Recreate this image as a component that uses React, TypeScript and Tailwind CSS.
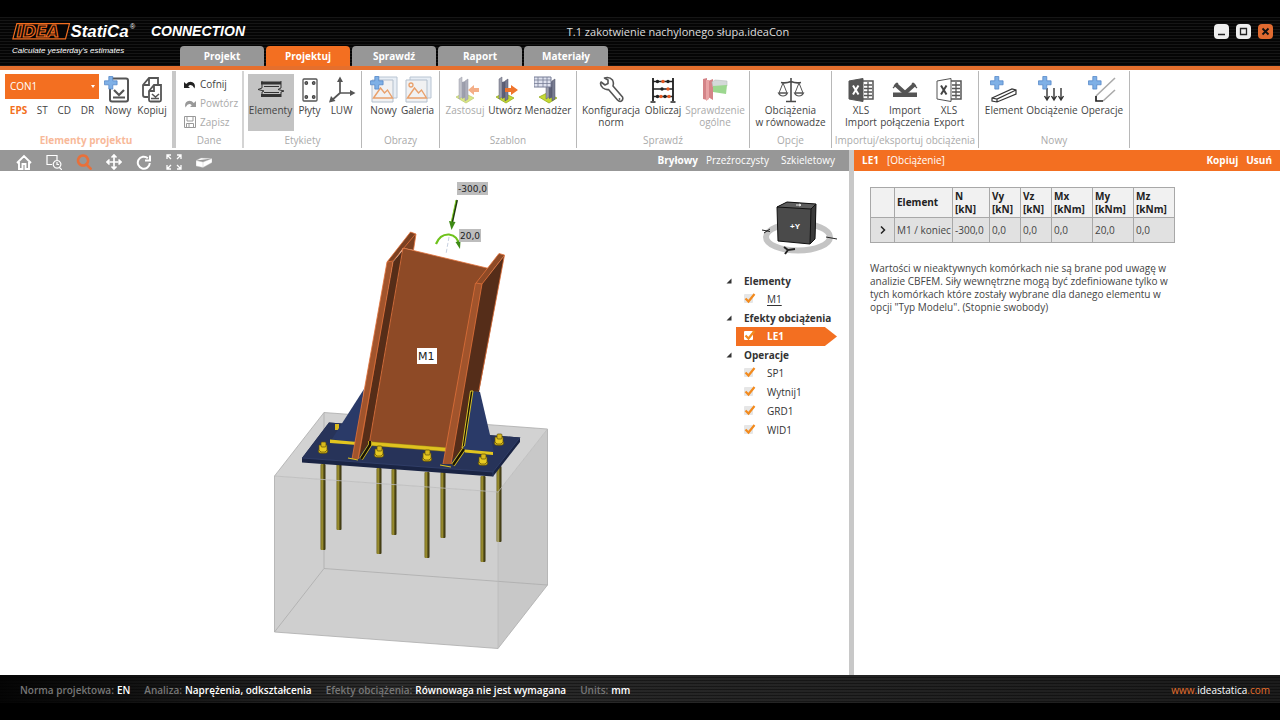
import type { ReactNode } from 'react';

const tabs = ['Projekt', 'Projektuj', 'Sprawdź', 'Raport', 'Materiały'];

const Svg = ({ children }: { children: ReactNode }) => (
  <svg viewBox="0 0 28 28" className="h-7 w-7 shrink-0" fill="none" aria-hidden="true">
    {children}
  </svg>
);

const Plus = () => (
  <path
    d="M4.8 0.5h4v4.3h4.3v4H8.8v4.3h-4V8.8H0.5v-4h4.3z"
    fill="#7fb0e6"
    stroke="#4a7fc4"
    strokeWidth="0.7"
  />
);

const NewDocIcon = () => (
  <Svg>
    <rect x="6" y="2.5" width="18" height="23" rx="2" stroke="#555" strokeWidth="2" />
    <path d="M9 21.5h12M10 14l5 5 5-5" stroke="#555" strokeWidth="2.2" />
    <Plus />
  </Svg>
);

const CopyDocIcon = () => (
  <Svg>
    <path d="M5 19V9l6-7h9v8M5 19q0 2 2 2h3M5 9h6V2" stroke="#555" strokeWidth="1.8" />
    <path d="M11 24V15l5-6h7v15q0 1.5-1.5 1.5h-9q-1.500 0-1.500-1.500zM11 15h5V9" fill="#fff" stroke="#555" strokeWidth="1.8" />
    <path d="M13 22.5h8M14 18l3.5 3 3.500-3" stroke="#555" strokeWidth="1.6" />
  </Svg>
);

const BeamIcon = () => (
  <Svg>
    <path d="M4 5.500h20v3H4zM4 18h20v3H4z" fill="#333" />
    <path d="M5 5v7l-4 1.500 6 1.500-2 1v5M24 5v7l-3 1.500 6 1.500-3 1v5M7 10.500h15M7 16.500h15" stroke="#333" />
  </Svg>
);

const PlateIcon = () => (
  <Svg>
    <rect x="7" y="3" width="14" height="22" rx="1" stroke="#555" strokeWidth="1.3" />
    <g stroke="#444" strokeWidth="1.2" fill="#888">
      <circle cx="10.3" cy="7" r="1.3" />
      <circle cx="17.7" cy="7" r="1.3" />
      <circle cx="10.3" cy="21" r="1.3" />
      <circle cx="17.7" cy="21" r="1.3" />
    </g>
  </Svg>
);

const AxesIcon = () => (
  <Svg>
    <path d="M12 3v14h13M12 17l-9 8" stroke="#555" strokeWidth="1.7" />
    <path d="M12 0.500l3 5.500H9zM27.500 17l-5.500 3v-6zM1 26.500l2-6.500 4.500 5z" fill="#555" />
  </Svg>
);

const PictureIcon = ({ add = false }: { add?: boolean }) => (
  <Svg>
    <path d="M6 1h21v21H6z" fill="#e8eef5" stroke="#b8c4d2" />
    <path d="M2 4h21v22H2z" fill="#f1f1f2" stroke="#b3bfcd" />
    <path d="M3.500 22l7-10 4 5 3-3 5 8z" stroke="#e9a06b" strokeWidth="1.4" />
    {add ? <Plus /> : <circle cx="7" cy="9" r="2" stroke="#e9a06b" strokeWidth="1.3" />}
  </Svg>
);

const ColumnIcon = ({ kind }: { kind: 'apply' | 'create' | 'manage' }) => (
  <Svg>
    <path d="M5 21l8-4 10 5-8 5z" fill="#c5d932" stroke="#97ad22" strokeWidth="0.8" />
    <g transform={kind === 'manage' ? 'translate(5 0)' : 'translate(1 0)'}>
      <path d="M7 3l3-2v20l-3 2z" fill="#9a9dab" stroke="#5c5f70" strokeWidth="0.5" />
      <path d="M10 6l4-1v16l-4 2z" fill="#5d6077" />
      <path d="M13 5l3-2v20l-3 2z" fill="#797d92" stroke="#4a4d60" strokeWidth="0.5" />
    </g>
    {kind === 'apply' && <path d="M28 12v4h-5v3l-6-5 6-5v3z" fill="#ee7a38" />}
    {kind === 'create' && <path d="M14 12h6V9l7 5-7 5v-3h-6z" fill="#ef742c" />}
    {kind === 'manage' && (
      <>
        <path d="M0 1h17v10H0z" fill="#dfe2ee" stroke="#777d96" />
        <path d="M0 4h17M0 7.500h17M4 1v10M9 1v10M13 1v10" stroke="#777d96" strokeWidth="0.8" />
      </>
    )}
  </Svg>
);

const WrenchIcon = () => (
  <Svg>
    <path
      d="M4 6l4 3 3-1.500V4L7.500 2q5-1.500 8 2 1.500 3 .5 6l9.500 11q1 2.500-1 4-2 1-4-1l-9-10.500q-3 .5-5.500-1.500Q2.500 9 4 6z"
      stroke="#555"
      strokeWidth="1.6"
      strokeLinejoin="round"
    />
    <circle cx="22.5" cy="23" r="0.9" fill="#555" />
  </Svg>
);

const AbacusIcon = () => (
  <Svg>
    <path d="M4 2v23M24 2v23" stroke="#333" strokeWidth="2" />
    <path d="M4 5.500h20M4 13h20M4 20.500h20M1.500 26h5M21.500 26h5" stroke="#222" strokeWidth="1.5" />
    <g fill="#222">
      <circle cx="8.5" cy="5.5" r="1.7" /><circle cx="19" cy="5.5" r="1.7" />
      <circle cx="13" cy="13" r="1.7" /><circle cx="8.5" cy="20.5" r="1.7" /><circle cx="16" cy="20.5" r="1.7" />
    </g>
    <g fill="#e85a22">
      <circle cx="14" cy="5.5" r="1.7" /><circle cx="19" cy="13" r="1.7" />
      <circle cx="12" cy="20.5" r="1.7" /><circle cx="20" cy="20.5" r="1.7" />
    </g>
  </Svg>
);

const CheckModelIcon = () => (
  <Svg>
    <path d="M2 3l4-1v22l-4-1zM7 5l5-2v21l-5-3z" fill="#b9343a" />
    <path d="M5 4h3v19l-3 2z" fill="#d9696b" />
    <path d="M11 6l3-2 12 1v5l-14 1z" fill="#b9c0c0" stroke="#8b9494" strokeWidth="0.6" />
    <path d="M12 10l14-1-1 9-13-2z" fill="#5bbd45" />
  </Svg>
);

const ScalesIcon = () => (
  <Svg>
    <path d="M14 2v23M4 6.500q5 1 10-1 5 2 10 1M9 25.500h10" stroke="#4a4a4a" strokeWidth="1.6" />
    <path d="M6 7l-4 10h8zM22 7l-4 10h8z" stroke="#555" />
    <path d="M1.500 17h9q-1.500 3-4.500 3t-4.500-3zM17.500 17h9q-1.500 3-4.500 3t-4.500-3z" stroke="#555" strokeWidth="1.2" />
  </Svg>
);

const XlsIcon = ({ solid = false }: { solid?: boolean }) => (
  <Svg>
    <path d="M15 5h11v18H15" fill="#fff" stroke="#555" strokeWidth="1.5" />
    <path d="M17 9h8M17 12.500h8M17 16h8M17 19.500h8M21 6v16" stroke="#555" strokeWidth="1.3" />
    <path d="M2 5l14-2.500v23L2 23z" fill={solid ? '#555' : '#fff'} stroke="#555" />
    <path d="M6 9.500l5.500 9M11.500 9.500l-5.500 9" stroke={solid ? '#fff' : '#444'} strokeWidth="2" />
  </Svg>
);

const ImportIcon = () => (
  <Svg>
    <path d="M2 16.500h24V21H2z" fill="#555" />
    <path d="M4 8l10 9M24 8l-10 9" stroke="#555" strokeWidth="4" />
    <path d="M7 7l-5 5M21 7l5 5" stroke="#555" strokeWidth="1.2" />
  </Svg>
);

const NewElementIcon = () => (
  <Svg>
    <path d="M2 22l20-9 4 1v4L7 26l-5-1zM2 22l5 1 19-9M7 23v3" stroke="#333" strokeWidth="1.2" />
    <Plus />
  </Svg>
);

const NewLoadIcon = () => (
  <Svg>
    <path d="M9 12v11M16 12v11M23 12v11M6.500 20L9 24l2.500-4M13.500 20l2.500 4 2.500-4M20.500 20l2.500 4 2.500-4" stroke="#333" strokeWidth="1.4" />
    <Plus />
  </Svg>
);

const NewOperationIcon = () => (
  <Svg>
    <path d="M8 20L27 2M15 25L27 14" stroke="#aaa" strokeWidth="1.6" />
    <path d="M8 20v5h7" stroke="#222" strokeWidth="1.7" />
    <Plus />
  </Svg>
);

type Item = { lines: string[]; icon: ReactNode; w: string; active?: boolean; off?: boolean };
type Group = { title: string; w: string; items: Item[] };

const groups: Group[] = [
  {
    title: 'Etykiety',
    w: 'w-[118px]',
    items: [
      { lines: ['Elementy'], icon: <BeamIcon />, w: 'w-[46px]', active: true },
      { lines: ['Płyty'], icon: <PlateIcon />, w: 'w-8' },
      { lines: ['LUW'], icon: <AxesIcon />, w: 'w-8' },
    ],
  },
  {
    title: 'Obrazy',
    w: 'w-[78px]',
    items: [
      { lines: ['Nowy'], icon: <PictureIcon add />, w: 'w-[34px]' },
      { lines: ['Galeria'], icon: <PictureIcon />, w: 'w-[34px]' },
    ],
  },
  {
    title: 'Szablon',
    w: 'w-[137px]',
    items: [
      { lines: ['Zastosuj'], icon: <ColumnIcon kind="apply" />, w: 'w-10', off: true },
      { lines: ['Utwórz'], icon: <ColumnIcon kind="create" />, w: 'w-10' },
      { lines: ['Menadżer'], icon: <ColumnIcon kind="manage" />, w: 'w-[46px]' },
    ],
  },
  {
    title: 'Sprawdź',
    w: 'w-[173px]',
    items: [
      { lines: ['Konfiguracja', 'norm'], icon: <WrenchIcon />, w: 'w-16' },
      { lines: ['Obliczaj'], icon: <AbacusIcon />, w: 'w-10' },
      { lines: ['Sprawdzenie', 'ogólne'], icon: <CheckModelIcon />, w: 'w-16', off: true },
    ],
  },
  {
    title: 'Opcje',
    w: 'w-[82px]',
    items: [{ lines: ['Obciążenia', 'w równowadze'], icon: <ScalesIcon />, w: 'w-16' }],
  },
  {
    title: 'Importuj/eksportuj obciążenia',
    w: 'w-[147px]',
    items: [
      { lines: ['XLS', 'Import'], icon: <XlsIcon solid />, w: 'w-11' },
      { lines: ['Import', 'połączenia'], icon: <ImportIcon />, w: 'w-11' },
      { lines: ['XLS', 'Export'], icon: <XlsIcon />, w: 'w-11' },
    ],
  },
  {
    title: 'Nowy',
    w: 'w-[151px]',
    items: [
      { lines: ['Element'], icon: <NewElementIcon />, w: 'w-10' },
      { lines: ['Obciążenie'], icon: <NewLoadIcon />, w: 'w-14' },
      { lines: ['Operacje'], icon: <NewOperationIcon />, w: 'w-11' },
    ],
  },
];

type TreeItem = { name: string; underline?: boolean; selected?: boolean };

const tree: { title: string; items: TreeItem[] }[] = [
  { title: 'Elementy', items: [{ name: 'M1', underline: true }] },
  { title: 'Efekty obciążenia', items: [{ name: 'LE1', selected: true }] },
  { title: 'Operacje', items: [{ name: 'SP1' }, { name: 'Wytnij1' }, { name: 'GRD1' }, { name: 'WID1' }] },
];

const columns = [
  { name: 'N', unit: '[kN]', value: '-300,0', w: 'w-[37px]' },
  { name: 'Vy', unit: '[kN]', value: '0,0', w: 'w-[31px]' },
  { name: 'Vz', unit: '[kN]', value: '0,0', w: 'w-[31px]' },
  { name: 'Mx', unit: '[kNm]', value: '0,0', w: 'w-[41px]' },
  { name: 'My', unit: '[kNm]', value: '20,0', w: 'w-[41px]' },
  { name: 'Mz', unit: '[kNm]', value: '0,0', w: 'w-[41px]' },
];

const status = [
  { label: 'Norma projektowa:', value: 'EN' },
  { label: 'Analiza:', value: 'Naprężenia, odkształcenia' },
  { label: 'Efekty obciążenia:', value: 'Równowaga nie jest wymagana' },
  { label: 'Units:', value: 'mm' },
];

function ToolButton({ item }: { item: Item }) {
  return (
    <button
      disabled={item.off}
      className={`${item.w} ${item.active ? 'bg-[#c3c3c3]' : ''} ${item.off ? 'text-[#aaa]' : 'text-[#444]'} flex h-[57px] shrink-0 flex-col items-center pt-0.5 text-[10px] leading-[12px] whitespace-nowrap`}
    >
      <span className={item.off ? 'opacity-60' : ''}>{item.icon}</span>
      {item.lines.map((line) => (
        <span key={line}>{line}</span>
      ))}
    </button>
  );
}

function Header() {
  return (
    <header className="border-b-4 border-[#e56f2d] bg-[repeating-linear-gradient(180deg,#050505_0px,#050505_2px,#161616_2px,#161616_3px)]">
      <div className="h-[17px] bg-black" />
      <div className="flex h-[29px] items-center">
        <div className="flex w-[245px] shrink-0 items-center">
          <svg viewBox="0 0 152 29" className="h-[29px] w-[152px]" role="img" aria-label="IDEA StatiCa">
            <path d="M17 6.500h53l-4 15.500H13z" fill="#050505" stroke="#f36f21" strokeWidth="1.2" />
            <text x="17" y="20" fontFamily="DejaVu Sans, sans-serif" fontStyle="italic" fontWeight="700" fontSize="16" fill="#1a0d05" stroke="#f36f21" strokeWidth="1.1">
              IDEA
            </text>
            <text x="71" y="20" fontFamily="Liberation Sans, sans-serif" fontStyle="italic" fontWeight="700" fontSize="17" fill="#fff">
              StatiCa
            </text>
            <text x="131" y="12" fontFamily="Liberation Sans, sans-serif" fontSize="7" fill="#fff">
              ®
            </text>
          </svg>
          <span className="font-['Liberation_Sans',sans-serif] text-[14px] font-bold text-white italic">CONNECTION</span>
        </div>
        <h1 className="flex-1 pt-0.5 text-center text-[11px] whitespace-nowrap text-[#ddd]">T.1 zakotwienie nachylonego słupa.ideaCon</h1>
        <div className="flex w-[169px] shrink-0 justify-end gap-[7px] pr-[7px]">
          <button aria-label="Minimalizuj" className="flex h-[15px] w-[15px] items-center justify-center rounded-sm bg-[#eee]">
            <svg viewBox="0 0 15 15" className="h-[15px] w-[15px]"><path d="M4 10.500h7" stroke="#222" strokeWidth="1.5" /></svg>
          </button>
          <button aria-label="Maksymalizuj" className="flex h-[15px] w-[15px] items-center justify-center rounded-sm bg-[#eee]">
            <svg viewBox="0 0 15 15" className="h-[15px] w-[15px]"><path d="M4.500 4.500h6v6h-6z" fill="none" stroke="#222" strokeWidth="1.3" /></svg>
          </button>
          <button aria-label="Zamknij" className="flex h-[15px] w-[15px] items-center justify-center rounded-sm bg-[#e06a30]">
            <svg viewBox="0 0 15 15" className="h-[15px] w-[15px]"><path d="M4.500 4.500l6 6M10.500 4.500l-6 6" stroke="#111" strokeWidth="1.8" /></svg>
          </button>
        </div>
      </div>
      <div className="flex h-5">
        <p className="w-[180px] shrink-0 pl-3 font-['Liberation_Sans',sans-serif] text-[8px] leading-[9px] text-white italic">
          Calculate yesterday's estimates
        </p>
        <nav className="flex gap-0.5">
          {tabs.map((tab) => (
            <button
              key={tab}
              className={`${tab === 'Projektuj' ? 'bg-[#f36f21]' : 'bg-[#979797]'} h-5 w-[84px] rounded-t-[4px] text-[10px] font-bold text-white`}
            >
              {tab}
            </button>
          ))}
        </nav>
      </div>
    </header>
  );
}

function Ribbon() {
  return (
    <div className="flex h-20 overflow-hidden bg-white pt-px pb-0.5">
      <div className="flex w-[176px] shrink-0 flex-col border-r-4 border-[#c8c8c8] pt-[3px]">
        <div className="flex h-[57px] pl-[5px]">
          <div className="w-[94px]">
            <div className="relative">
              <select aria-label="Element projektu" className="block h-[25px] w-full appearance-none bg-[#f36f21] pl-[5px] text-[10px] text-white">
                <option>CON1</option>
              </select>
              <svg viewBox="0 0 4 3" className="pointer-events-none absolute top-[11px] right-1 h-[3px] w-1"><path d="M0 0h4L2 3z" fill="#fff" /></svg>
            </div>
            <div className="flex justify-around pt-[5px] text-[10px] leading-[12px] text-[#444]">
              <button className="font-bold text-[#f36f21]">EPS</button>
              <button>ST</button>
              <button>CD</button>
              <button>DR</button>
            </div>
          </div>
          <div className="flex pl-0.5">
            <ToolButton item={{ lines: ['Nowy'], icon: <NewDocIcon />, w: 'w-[34px]' }} />
            <ToolButton item={{ lines: ['Kopiuj'], icon: <CopyDocIcon />, w: 'w-[34px]' }} />
          </div>
        </div>
        <p className="pt-[3px] text-center text-[10px] leading-[13px] font-bold text-[#f8b999]">Elementy projektu</p>
      </div>

      <div className="flex w-[68px] shrink-0 flex-col border-r-2 border-[#d4d4d4] pt-[3px]">
        <div className="flex h-[57px] flex-col gap-px pt-0.5 pl-2 text-[10px] text-[#aaa]">
          <button className="flex h-[18px] items-center gap-1 text-[#444]">
            <svg viewBox="0 0 12 12" className="h-3 w-3"><path d="M0 3v6h6L4.200 7.200Q7.500 4 10.500 9.500 12 5 8.500 3.200 5 2 2.200 5z" fill="#222" /></svg>
            Cofnij
          </button>
          <button disabled className="flex h-[18px] items-center gap-1">
            <svg viewBox="0 0 12 12" className="h-3 w-3"><path d="M12 3v6H6l1.800-1.800Q4.500 4 1.500 9.500 0 5 3.500 3.200 7 2 9.800 5z" fill="#999" /></svg>
            Powtórz
          </button>
          <button disabled className="flex h-[18px] items-center gap-1">
            <svg viewBox="0 0 12 12" className="h-3 w-3" fill="none" stroke="#999"><path d="M.5.5h11v11H.5zM3 .5v4.500h6V.5M2.500 11.500v-4h7v4M5 8v3" /></svg>
            Zapisz
          </button>
        </div>
        <p className="pt-[3px] text-center text-[10px] leading-[13px] text-[#aaa]">Dane</p>
      </div>

      {groups.map((group) => (
        <div key={group.title} className={`${group.w} flex shrink-0 flex-col border-r border-[#b8b8b8] pt-[3px]`}>
          <div className="flex justify-center">
            {group.items.map((item) => (
              <ToolButton key={item.lines.join(' ')} item={item} />
            ))}
          </div>
          <p className="pt-[3px] text-center text-[10px] leading-[13px] whitespace-nowrap text-[#aaa]">{group.title}</p>
        </div>
      ))}
    </div>
  );
}

const viewIcons = [
  { name: 'Widok domyślny', color: '#fff', d: <path d="M1 9l7-7 7 7M3 8v7h3.500v-5h3v5H13V8" /> },
  { name: 'Powiększ obszar', color: '#fff', d: <path d="M6 10.500H1v-9h10V6M13.500 13.500L16 16M11 6.500a3.800 3.800 0 1 0 .1 0zM11 8v2.500h2" strokeWidth="1.2" /> },
  { name: 'Powiększ', color: '#e8703a', d: <path d="M7 1.500a5 5 0 1 0 .1 0zM10.500 10.500l5 5" strokeWidth="2.6" /> },
  { name: 'Przesuń', color: '#fff', d: <path d="M8 1v14M1 8h14M5.500 3.500L8 1l2.500 2.500M5.500 12.500L8 15l2.500-2.500M3.500 5.500L1 8l2.500 2.500M12.500 5.500L15 8l-2.500 2.500" strokeWidth="1.7" /> },
  { name: 'Obróć', color: '#fff', d: <path d="M13.800 9a6 6 0 1 1-2-4.800M14 1.500v5H9" strokeWidth="2" /> },
  { name: 'Dopasuj', color: '#fff', d: <path d="M1 5V1h4M1 1l4 4M11 1h4v4M15 1l-4 4M1 11v4h4M1 15l4-4M15 11v4h-4M15 15l-4-4" strokeWidth="1.3" /> },
  { name: 'Bryła', color: '#fff', d: <path d="M0 6.500l5-2.500 11 .5v4L7 13.500 0 12zM0 6.500l7 1.500 9-3.500M7 8v5.500" fill="#fff" stroke="#bbb" strokeWidth="0.4" /> },
];

const frontRods = [
  [323, 464, 550],
  [379, 468, 554],
  [427, 472, 558],
  [483, 476, 562],
];
const backRods = [
  [339, 464, 530],
  [394, 469, 535],
  [443, 472, 538],
  [499, 466, 542],
];
const nuts = [
  [323, 448],
  [379, 452],
  [427, 456],
  [483, 460],
  [499, 440],
];

function ModelView() {
  return (
    <svg viewBox="0 171 720 504" className="min-w-0 flex-1 self-stretch" role="img" aria-label="Model 3D połączenia">
      <defs>
        <linearGradient id="rod">
          <stop offset="0" stopColor="#6f651c" />
          <stop offset="0.35" stopColor="#a39632" />
          <stop offset="0.7" stopColor="#4a4315" />
          <stop offset="1" stopColor="#3a3410" />
        </linearGradient>
      </defs>

      {/* concrete block */}
      <path d="M274.500 476L324 412.500 547.500 429 498 492z" fill="#d2d2d2" />
      <path d="M274.500 476L498 492V648.500L274.500 632z" fill="#cfcfcf" />
      <path d="M498 492L547.500 429V585L498 648.500z" fill="#c8c8c8" />
      <path
        d="M274.500 476L324 412.500 547.500 429V585L498 648.500 274.500 632zM324 412.500V568.500L274.500 632M324 568.500L547.500 585"
        fill="none"
        stroke="#acacac"
        strokeWidth="0.8"
      />

      {backRods.map(([x, y1, y2]) => (
        <rect key={x} x={x - 2.5} y={y1} width="5" height={y2 - y1} rx="1" fill="url(#rod)" />
      ))}
      {frontRods.map(([x, y1, y2]) => (
        <rect key={x} x={x - 2.5} y={y1} width="5" height={y2 - y1} rx="1" fill="url(#rod)" />
      ))}
      <path d="M274.500 476L498 492L547.500 429M498 492V648.500" fill="none" stroke="#bababa" strokeWidth="0.8" />

      {/* base plate */}
      <path d="M302 458L329 422.500 520 437.500V442L493 476.500 302 462.500z" fill="#1a2444" />
      <path d="M302 458L329 422.500 520 437.500 493 472z" fill="#273359" />
      <path d="M302 458L493 472 520 437.500M493 472V476.500" fill="none" stroke="#33416c" strokeWidth="0.8" />
      <path d="M335 424h4v6h-4z" fill="#d8b81c" />

      {/* left gusset */}
      <path d="M364 389L332 439 357 443z" fill="#2a3a68" />
      <path d="M330 439.500L357 442V445L330 443z" fill="#e2c51f" />

      {/* I-section */}
      <path d="M403 248L491 269 446 449 369 443z" fill="#8e4a26" />
      <path d="M369 441.500L446 447.500V451.500L369 445.500z" fill="#dfc21f" stroke="#7c6b10" strokeWidth="0.4" />
      <path d="M393 262L403 250 369.500 442 357 459z" fill="#562d18" />
      <path d="M387 262L410.500 232 416 234 413.500 250 403 248 393 262z" fill="#7b4021" />
      <path d="M387 262L393 261 359 459H352z" fill="#a1542c" />
      <path d="M387 262L410.500 232 416 234 413.500 250M387 262L393 261 415.500 234M387 262L352 459M393 262L358 459M403 248L369.500 442M403 248L491 269" fill="none" stroke="#e2713a" strokeWidth="0.8" />
      <path d="M361 459L370 445 370 441" fill="none" stroke="#ddc322" strokeWidth="4" />
      <path d="M361 459L370 445 370 441" fill="none" stroke="#171305" strokeWidth="2.4" />

      {/* right gusset */}
      <path d="M472 390L480 392 494 452 464 450z" fill="#2a3a68" />
      <path d="M482 284L504.500 255 479 392 472 391 463 448 450 463z" fill="#552d19" />
      <path d="M476 283L499 253.500 504.500 255 482 284z" fill="#8e4a26" />
      <path d="M476 283L482 284 451 464H443z" fill="#a1542c" />
      <path d="M476 283L499 253.500 504.500 255 479 390M476 283L482 284 504 256M475.500 283L443 464M482 284L451 464" fill="none" stroke="#e2713a" strokeWidth="0.8" />
      <path d="M470.500 391L473 391 464.500 446 462 448z" fill="#171305" stroke="#d9c227" strokeWidth="1" />
      <path d="M453 465L464 449" stroke="#ddc322" strokeWidth="4" />
      <path d="M453 465L464 449" stroke="#171305" strokeWidth="2.4" />
      <path d="M465 449.500L493 452V455L465 452.500z" fill="#e2c51f" />
      <path d="M348 458l10 2M440 465l11 2" stroke="#ddc322" strokeWidth="1.2" />

      {nuts.map(([x, y]) => (
        <g key={x} stroke="#5c4d08" strokeWidth="0.7">
          <ellipse cx={x} cy={y + 3} rx="4.8" ry="2.5" fill="#d0af16" />
          <path d={`M${x - 4} ${y - 3}h8v5l-2 2h-4l-2-2z`} fill="#e8ca22" />
          <rect x={x - 2} y={y - 6} width="5" height="5" rx="1" fill="#d8b91d" />
        </g>
      ))}

      {/* loads */}
      <path d="M449 237l-3 17" stroke="#b7c4d6" strokeWidth="0.8" strokeDasharray="4 2" />
      <path d="M457 200l-5 23" stroke="#1d3a0c" strokeWidth="2" />
      <path d="M456 200l-5 23" stroke="#7fd51e" strokeWidth="0.9" />
      <path d="M449 221l6.500 1L451.500 230z" fill="#3e8a16" />
      <path d="M436 244Q440 234 449 234.500 458 236 459 245" fill="none" stroke="#6fc21c" strokeWidth="2.2" />
      <path d="M455.500 242l5-1-.5 8z" fill="#3e8a16" />
      <g fontFamily="DejaVu Sans, sans-serif" fill="#222">
        <path d="M457 182h31v13h-31zM459 229h22v13h-22z" fill="#bdbdbd" />
        <text x="458" y="192" fontSize="9">-300,0</text>
        <text x="460" y="239" fontSize="9">20,0</text>
        <path d="M417 348h20v16h-20z" fill="#fff" />
        <text x="418" y="360" fontSize="11">M1</text>
      </g>
    </svg>
  );
}

function ViewCube() {
  return (
    <svg viewBox="0 0 76 60" className="h-[60px] w-[76px]" role="img" aria-label="Orientacja widoku">
      <ellipse cx="36" cy="38" rx="32" ry="13.5" fill="none" stroke="#c4c4c4" strokeWidth="6" />
      <path d="M0 31l8 1.500M2 34l6-4M64 38l11 2" stroke="#222" />
      <path d="M15 8L25 3 54 5 53 40 48 45 16 42z" fill="#4a4a4a" />
      <path d="M15 8L25 3 54 5 49 10z" fill="#5d5d5d" />
      <path d="M49 10L54 5 53 40 48 45z" fill="#3a3a3a" />
      <path d="M15 8L25 3 54 5 53 40 48 45 16 42zM15 8L49 10 48 45M49 10L54 5" fill="none" stroke="#111" />
      <path d="M34 6h5M37 5l2 1-2 1" stroke="#eee" fill="none" />
      <text x="28" y="30" fontFamily="Liberation Sans, sans-serif" fontSize="8" fontWeight="700" fill="#fff">+Y</text>
      <path d="M22 48l4 3 7-1M26 51l-3 4" stroke="#222" strokeWidth="2" fill="none" />
    </svg>
  );
}

function Tree() {
  return (
    <aside className="flex w-[129px] shrink-0 flex-col pt-7 pl-1.5">
      <div className="pl-9">
        <ViewCube />
      </div>
      <div className="pt-[13px] text-[10px] text-[#333]">
        {tree.map((section) => (
          <section key={section.title}>
            <h2 className="flex h-[18px] items-center gap-3 font-bold">
              <svg viewBox="0 0 6 6" className="h-1.5 w-1.5 shrink-0"><path d="M5.500.5v5h-5z" fill="#333" /></svg>
              <span className="whitespace-nowrap">{section.title}</span>
            </h2>
            <div className="pl-2.5">
              {section.items.map((item) => (
                <label
                  key={item.name}
                  className={`${item.selected ? 'bg-[#f36f21] font-bold text-white [clip-path:polygon(0_0,88%_0,100%_50%,88%_100%,0_100%)]' : ''} flex h-[19px] w-[101px] items-center gap-3 pl-2`}
                >
                  <span className="relative h-[11px] w-[11px]">
                    <input
                      type="checkbox"
                      defaultChecked
                      className={`${item.selected ? 'bg-white' : 'bg-[#e6e6e6]'} block h-[9px] w-[9px] appearance-none rounded-[1px]`}
                    />
                    <svg viewBox="0 0 12 11" className="pointer-events-none absolute -top-px left-0 h-[11px] w-3">
                      <path d="M1.500 5.500l3 3L10.500 1" fill="none" stroke="#f28a1e" strokeWidth="2.2" />
                    </svg>
                  </span>
                  <span className={item.underline ? 'underline underline-offset-2' : ''}>{item.name}</span>
                </label>
              ))}
            </div>
          </section>
        ))}
      </div>
    </aside>
  );
}

function LoadPanel() {
  return (
    <section className="flex w-[426px] shrink-0 flex-col text-[10px]">
      <div className="flex h-[21px] items-center bg-[#f36f21] px-2 text-white">
        <h2 className="font-bold">LE1</h2>
        <span className="pl-2">[Obciążenie]</span>
        <div className="ml-auto flex gap-2 font-bold">
          <button>Kopiuj</button>
          <button>Usuń</button>
        </div>
      </div>
      <div className="pt-4 pl-4 text-[#444]">
        <table className="w-[305px] table-fixed border-collapse border border-[#a8a8a8]">
          <thead>
            <tr className="h-[30px] bg-[#f1f1f1] text-left leading-[13px] text-[#222]">
              <th className="w-6 border border-[#a8a8a8]" />
              <th className="w-[58px] border border-[#a8a8a8] pl-0.5">Element</th>
              {columns.map((column) => (
                <th key={column.name} className={`${column.w} border border-[#a8a8a8] pl-0.5`}>
                  {column.name}
                  <br />
                  {column.unit}
                </th>
              ))}
            </tr>
          </thead>
          <tbody>
            <tr className="h-[25px] bg-[#e1e1e1] whitespace-nowrap">
              <td className="border border-[#a8a8a8]">
                <svg viewBox="0 0 8 8" className="mx-auto h-2 w-2"><path d="M2 .5L5.500 4 2 7.500" fill="none" stroke="#222" strokeWidth="1.5" /></svg>
              </td>
              <td className="border border-[#a8a8a8] pl-0.5">M1 / koniec</td>
              {columns.map((column) => (
                <td key={column.name} className="border border-[#a8a8a8] pl-0.5">{column.value}</td>
              ))}
            </tr>
          </tbody>
        </table>
        <p className="w-[300px] pt-[19px] leading-[13px]">
          Wartości w nieaktywnych komórkach nie są brane pod uwagę w analizie CBFEM. Siły wewnętrzne mogą być zdefiniowane tylko w
          tych komórkach które zostały wybrane dla danego elementu w opcji "Typ Modelu". (Stopnie swobody)
        </p>
      </div>
    </section>
  );
}

export default function App() {
  return (
    <div className="flex min-h-screen flex-col bg-white font-['Open_Sans','Noto_Sans',sans-serif]">
      <Header />
      <Ribbon />
      <main className="flex flex-1">
        <section className="flex min-w-0 flex-1 flex-col">
          <div className="flex h-[21px] items-center bg-[#979797] pr-[14px] pl-4 text-[10px] text-white">
            <div className="flex gap-3.5 pt-0.5">
              {viewIcons.map((icon) => (
                <button key={icon.name} aria-label={icon.name}>
                  <svg viewBox="0 0 16 16" className="h-4 w-4" fill="none" stroke={icon.color} strokeWidth="1.9">
                    {icon.d}
                  </svg>
                </button>
              ))}
            </div>
            <div className="ml-auto flex">
              <button className="font-bold">Bryłowy</button>
              <button className="pl-2">Przeźroczysty</button>
              <button className="pl-3">Szkieletowy</button>
            </div>
          </div>
          <div className="flex flex-1">
            <ModelView />
            <Tree />
          </div>
        </section>
        <div className="w-[5px] shrink-0 bg-[#c8c8c8]" />
        <LoadPanel />
      </main>
      <footer className="bg-black text-[10px] font-semibold">
        <div className="flex h-7 items-center bg-[repeating-linear-gradient(180deg,transparent_0px,transparent_2px,#0006_2px,#0006_3px),linear-gradient(90deg,#050505,#2b2b2b_30%,#1c1c1c)] pt-0.5 pr-[10px] pl-5">
          <dl className="flex gap-3.5">
            {status.map((entry) => (
              <div key={entry.label} className="flex gap-[3px]">
                <dt className="text-[#777]">{entry.label}</dt>
                <dd className="text-white">{entry.value}</dd>
              </div>
            ))}
          </dl>
          <a href="#" className="ml-auto font-normal text-[#e56f2d]">
            www.<span className="text-white">ideastatica</span>.com
          </a>
        </div>
        <div className="h-[17px]" />
      </footer>
    </div>
  );
}
